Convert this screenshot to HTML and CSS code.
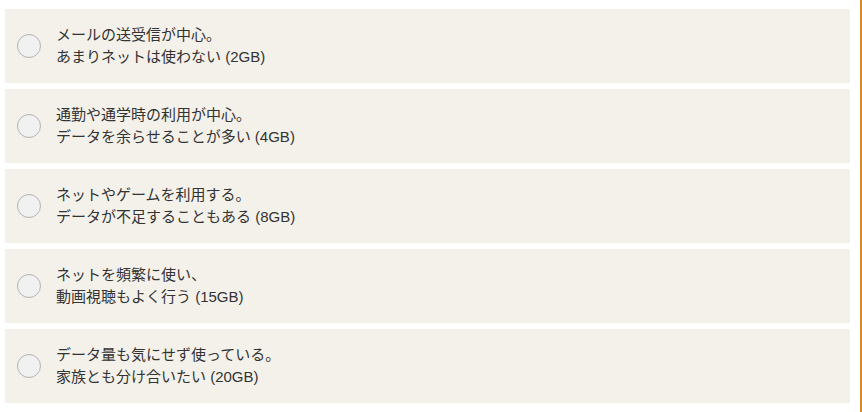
FILE: index.html
```html
<!DOCTYPE html>
<html lang="ja">
<head>
<meta charset="utf-8">
<link rel="stylesheet" href="styles.css">
</head>
<body>
<div class="page">
  <ul class="options">
    <li class="option"><span class="radio"></span><span class="label">メールの送受信が中心。<br>あまりネットは使わない (2GB)</span></li>
    <li class="option"><span class="radio"></span><span class="label">通勤や通学時の利用が中心。<br>データを余らせることが多い (4GB)</span></li>
    <li class="option"><span class="radio"></span><span class="label">ネットやゲームを利用する。<br>データが不足することもある (8GB)</span></li>
    <li class="option"><span class="radio"></span><span class="label">ネットを頻繁に使い、<br>動画視聴もよく行う (15GB)</span></li>
    <li class="option"><span class="radio"></span><span class="label">データ量も気にせず使っている。<br>家族とも分け合いたい (20GB)</span></li>
  </ul>
</div>
</body>
</html>
```
FILE: styles.css
```css
html, body {
  margin: 0;
  padding: 0;
  background: #ffffff;
}
.page {
  width: 860px;
  height: 412px;
  border-right: 2px solid #d38a2c;
  overflow: hidden;
}
.options {
  list-style: none;
  margin: 0;
  padding: 9px 0 0 5px;
  width: 845px;
  display: flex;
  flex-direction: column;
  gap: 6px;
}
.option {
  height: 74px;
  background: #f4f1eb;
  display: flex;
  align-items: center;
  padding-left: 12px;
  box-sizing: border-box;
}
.radio {
  width: 24px;
  height: 24px;
  border-radius: 50%;
  border: 1px solid #b4b4b4;
  background: #f1f1f1;
  flex: none;
  margin-right: 15px;
  box-sizing: border-box;
}
.label {
  font-family: "Liberation Sans", "Noto Sans CJK JP", sans-serif;
  font-size: 15px;
  line-height: 22px;
  color: #333333;
}
```
